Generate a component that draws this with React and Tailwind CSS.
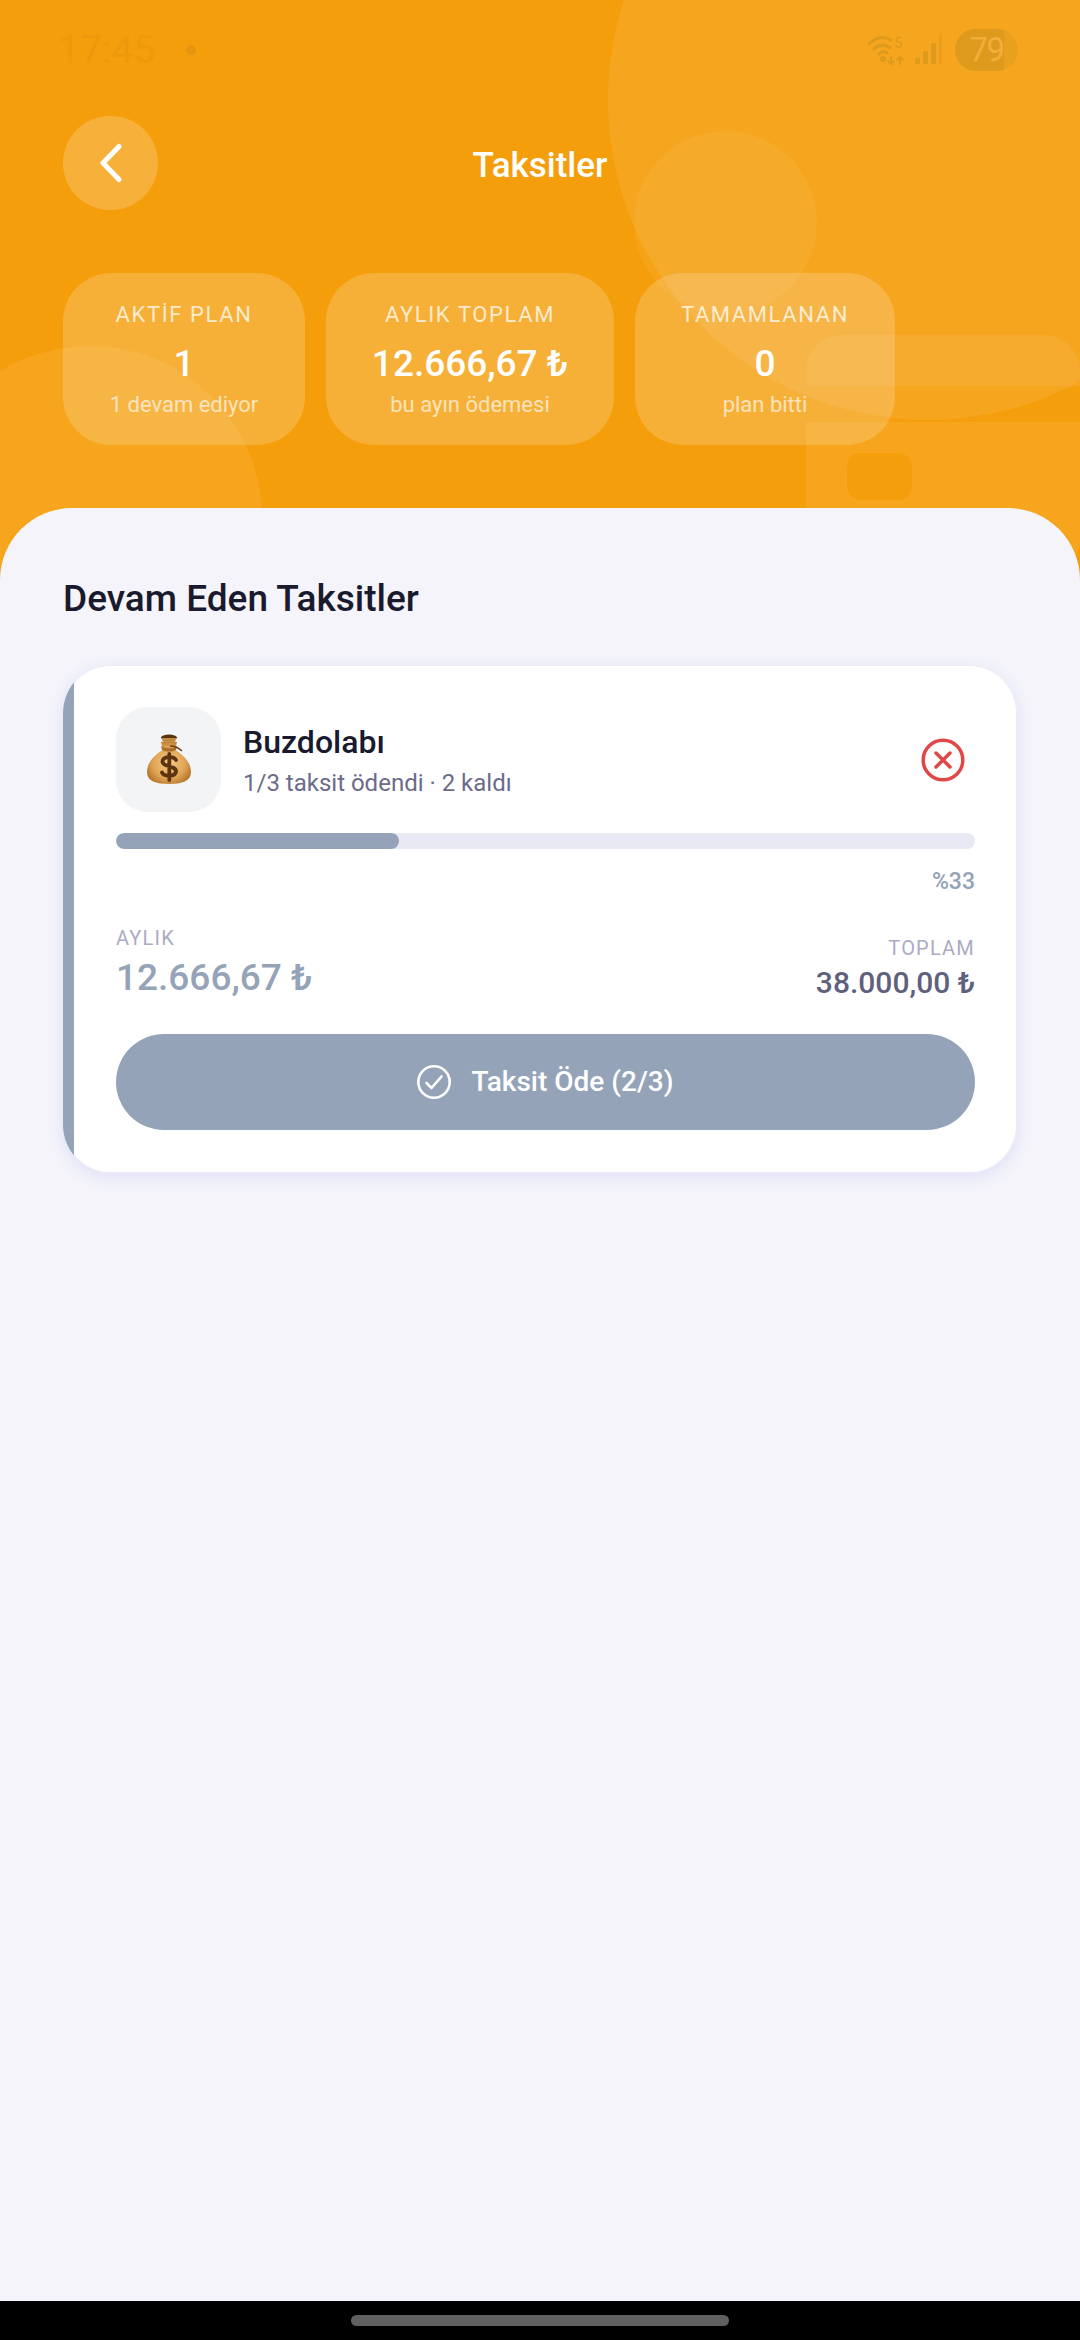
const ROBOTO = "font-['Roboto',sans-serif]";

function StatCard({ label, value, sub, width }) {
  return (
    <div className={`flex h-[172px] flex-col items-center rounded-[48px] bg-white/[0.18] pt-[27px] ${width}`}>
      <span className="text-[22px] leading-[30px] font-normal tracking-[1.6px] text-white/75">{label}</span>
      <span className="mt-[9px] text-[37px] leading-[50px] font-medium text-white">{value}</span>
      <span className="mt-[2px] text-[22px] leading-[28px] text-white/65">{sub}</span>
    </div>
  );
}

function WifiIcon() {
  return (
    <svg width="38" height="32" viewBox="0 0 38 32" fill="none" stroke="#DE9A1C" strokeWidth="3" strokeLinecap="round">
      <path d="M2 10 C9 3 17 2 24 6" />
      <path d="M7 15 C12 10 18 10 23 14" />
      <path d="M12 20 C15 17 18 17 20 19" />
      <circle cx="16" cy="25" r="1.5" fill="#DE9A1C" />
      <path d="M24 23 V30 M21 27 L24 30 L27 27" strokeWidth="2" />
      <path d="M33 30 V23 M30 26 L33 23 L36 26" strokeWidth="2" />
      <text x="27" y="14" fontSize="15" fill="#DE9A1C" stroke="none">5</text>
    </svg>
  );
}

function SignalIcon() {
  return (
    <svg width="28" height="30" viewBox="0 0 28 30" fill="#DE9A1C">
      <rect x="0" y="23" width="5" height="6" rx="1" />
      <rect x="8" y="16" width="5" height="13" rx="1" />
      <rect x="16" y="8" width="5" height="21" rx="1" />
      <rect x="24" y="0" width="3" height="29" rx="1" opacity="0.5" />
    </svg>
  );
}

function MoneyBag() {
  return (
    <svg width="46" height="52" viewBox="0 0 46 52">
      <defs>
        <radialGradient id="bag" cx="50%" cy="50%" r="62%">
          <stop offset="0%" stopColor="#F5CC85" />
          <stop offset="60%" stopColor="#E0A355" />
          <stop offset="100%" stopColor="#A9681E" />
        </radialGradient>
      </defs>
      <path d="M15 8 L31 8 L29 16 C38 21 45 29 45 38 C45 47 36 50 23 50 C10 50 1 47 1 38 C1 29 8 21 17 16 Z" fill="url(#bag)" />
      <path d="M15 12 C20 15 26 15 31 12 L30 16 C26 18 20 18 16 16 Z" fill="#A9712D" />
      <ellipse cx="23" cy="3.5" rx="8" ry="3" fill="#5A3410" />
      <path d="M16 4 L30 4 L29 9 L17 9 Z" fill="#C28A45" />
      <path d="M24 12 C29 12 33 14 36 17" fill="none" stroke="#6B4014" strokeWidth="1.5" />
      <path d="M30 26 C28 22 17 22 16.5 27.5 C16.5 33.5 30 31 30 37.5 C29.5 43 18 43 16 38.5 M23.3 20 V46" fill="none" stroke="#5C3410" strokeWidth="3.8" strokeLinecap="round" />
    </svg>
  );
}

export default function App() {
  return (
    <div className={`relative flex h-[2340px] w-[1080px] flex-col overflow-hidden bg-[#F4F4FA] ${ROBOTO}`}>
      {/* orange header, the sheet below overlaps its lower edge */}
      <div className="relative h-[580px] shrink-0 overflow-hidden bg-[#F59E0B]">
        <div className="absolute top-[-220px] left-[608px] h-[640px] w-[640px] rounded-full bg-white/[0.08]" />
        <div className="absolute top-[131px] left-[634px] h-[183px] w-[183px] rounded-full bg-white/[0.05]" />
        <div className="absolute top-[346px] left-[-82px] h-[344px] w-[344px] rounded-full bg-white/[0.07]" />
        <div className="absolute top-[335px] left-[806px] h-[51px] w-[274px] rounded-t-[36px] bg-white/[0.07]" />
        <div className="absolute top-[422px] left-[806px] h-[153px] w-[274px] rounded-b-[36px] bg-white/[0.07]" />
        <div className="absolute top-[453px] left-[847px] h-[47px] w-[65px] rounded-[14px] bg-[#F59E0B]" />

        <div className="relative flex h-[100px] items-center justify-between pr-[62px] pl-[58px]">
          <div className="flex items-center gap-[31px]">
            <span className="text-[39px] leading-[46px] text-[#EC990C]">17:45</span>
            <span className="h-[10px] w-[10px] rounded-full bg-[#E5960F]" />
          </div>
          <div className="flex items-center gap-[10px]">
            <WifiIcon />
            <SignalIcon />
            <div className="relative ml-[2px] flex h-[42px] w-[63px] items-center justify-center overflow-hidden rounded-full bg-[#E8A01F]">
              <div className="absolute inset-y-0 left-0 w-[49px] bg-[#DE9A1C]" />
              <span className="relative text-[33px] leading-[42px] tracking-[-1.5px] text-[#F2AE3A]">79</span>
            </div>
          </div>
        </div>

        <div className="relative mt-[16px] flex h-[94px] items-center px-[63px]">
          <button className="flex h-[94px] w-[95px] items-center justify-center rounded-full bg-white/20">
            <svg width="24" height="40" viewBox="0 0 24 40" fill="none" stroke="white" strokeWidth="5" strokeLinecap="round" strokeLinejoin="round">
              <path d="M20 3.5 L4 20 L20 36.5" />
            </svg>
          </button>
          <h1 className="absolute inset-x-0 top-[3px] text-center text-[35px] leading-[94px] font-medium text-white">Taksitler</h1>
        </div>

        <div className="relative mt-[63px] flex gap-[21px] px-[63px]">
          <StatCard label="AKTİF PLAN" value="1" sub="1 devam ediyor" width="w-[242px]" />
          <StatCard label="AYLIK TOPLAM" value="12.666,67 ₺" sub="bu ayın ödemesi" width="w-[288px]" />
          <StatCard label="TAMAMLANAN" value="0" sub="plan bitti" width="w-[260px]" />
        </div>
      </div>

      <div className="relative z-10 -mt-[72px] flex flex-1 flex-col rounded-t-[72px] bg-[#F4F4FA] px-[63px] pt-[68px]">
        <h2 className="text-[37px] leading-[46px] font-medium text-[#1A1A2E]">Devam Eden Taksitler</h2>

        <div className="relative mt-[43px] flex flex-col overflow-hidden rounded-[48px] bg-white pt-[42px] pr-[42px] pb-[43px] pl-[53px] shadow-[inset_0_0_0_1px_#ECECF6,0_4px_16px_rgba(108,92,231,0.14)]">
          <div className="absolute inset-y-0 left-0 w-[11px] bg-[#94A3B8]" />

          <div className="flex items-center">
            <div className="flex h-[105px] w-[105px] items-center justify-center rounded-[32px] bg-[#F3F4F6]">
              <MoneyBag />
            </div>
            <div className="ml-[22px] flex-1">
              <div className="text-[32px] leading-[44px] font-medium text-[#1A1A2E]">Buzdolabı</div>
              <div className="mt-[2px] text-[24px] leading-[34px] text-[#6B6B8A]">1/3 taksit ödendi · 2 kaldı</div>
            </div>
            <svg className="mr-[10px]" width="44" height="44" viewBox="0 0 44 44" fill="none" stroke="#E04848" strokeWidth="3.5" strokeLinecap="round">
              <circle cx="22" cy="22" r="19.8" />
              <path d="M15 15 L29 29 M29 15 L15 29" />
            </svg>
          </div>

          <div className="mt-[21px] h-[16px] overflow-hidden rounded-full bg-[#E9E9F4]">
            <div className="h-full w-[33%] rounded-full bg-[#94A3B8]" />
          </div>
          <div className="mt-[18px] text-right text-[23px] leading-[30px] font-medium text-[#94A3B8]">%33</div>

          <div className="mt-[28px] flex items-end justify-between">
            <div>
              <div className="text-[20px] leading-[26px] font-normal tracking-[1.2px] text-[#ABABC4]">AYLIK</div>
              <div className="mt-[2px] text-[37px] leading-[50px] font-medium text-[#94A3B8]">12.666,67 ₺</div>
            </div>
            <div className="text-right">
              <div className="text-[20px] leading-[26px] font-normal tracking-[1.2px] text-[#ABABC4]">TOPLAM</div>
              <div className="mt-[2px] text-[30px] leading-[40px] font-medium text-[#5F5F7E]">38.000,00 ₺</div>
            </div>
          </div>

          <button className="mt-[31px] flex h-[96px] items-center justify-center gap-[20px] rounded-full bg-[#94A3B8]">
            <svg width="34" height="34" viewBox="0 0 34 34" fill="none" stroke="white" strokeWidth="2.6" strokeLinecap="round" strokeLinejoin="round">
              <circle cx="17" cy="17" r="15.7" />
              <path d="M9.5 18 L14.5 23 L24.5 11.5" />
            </svg>
            <span className="text-[28px] leading-[38px] font-medium text-white">Taksit Öde (2/3)</span>
          </button>
        </div>
      </div>

      <div className="flex h-[39px] shrink-0 items-start justify-center bg-black pt-[14px]">
        <div className="h-[11px] w-[378px] rounded-full bg-[#606060]" />
      </div>
    </div>
  );
}
